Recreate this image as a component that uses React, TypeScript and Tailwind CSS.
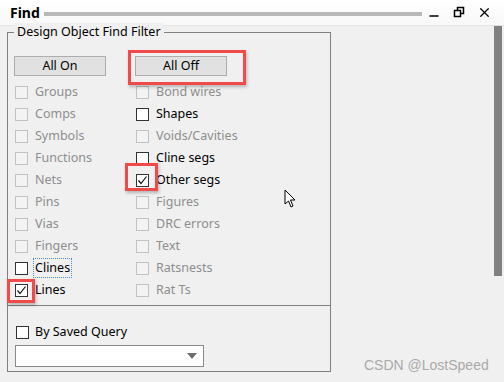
import { Minus, X } from 'lucide-react';

type Item = { label: string; enabled?: boolean; checked?: boolean; focus?: boolean };

const leftItems: Item[] = [
  { label: 'Groups' },
  { label: 'Comps' },
  { label: 'Symbols' },
  { label: 'Functions' },
  { label: 'Nets' },
  { label: 'Pins' },
  { label: 'Vias' },
  { label: 'Fingers' },
  { label: 'Clines', enabled: true, focus: true },
  { label: 'Lines', enabled: true, checked: true },
];

const rightItems: Item[] = [
  { label: 'Bond wires' },
  { label: 'Shapes', enabled: true },
  { label: 'Voids/Cavities' },
  { label: 'Cline segs', enabled: true },
  { label: 'Other segs', enabled: true, checked: true },
  { label: 'Figures' },
  { label: 'DRC errors' },
  { label: 'Text' },
  { label: 'Ratsnests' },
  { label: 'Rat Ts' },
];

function Box({ enabled, checked }: { enabled?: boolean; checked?: boolean }) {
  return (
    <span
      className={`w-[13px] h-[13px] shrink-0 border flex items-center justify-center ${
        enabled ? 'border-[#333333] bg-white' : 'border-[#c2c2c2] bg-[#f3f3f3]'
      }`}
    >
      {checked && (
        <svg width="11" height="11" viewBox="0 0 11 11">
          <path d="M1.5 5.5 L4 8.5 L9.5 1.5" fill="none" stroke="#111" strokeWidth="1.2" />
        </svg>
      )}
    </span>
  );
}

function Row({ item }: { item: Item }) {
  return (
    <div className="h-[22px] flex items-center">
      <Box enabled={item.enabled} checked={item.checked} />
      <span
        className={`ml-[6px] leading-[18px] px-[1px] ${
          item.focus ? 'outline outline-1 outline-dotted outline-[#4a90d9]' : ''
        } ${item.enabled ? 'text-black' : 'text-[#8e8e8e]'}`}
      >
        {item.label}
      </span>
    </div>
  );
}

function WinButton({ label }: { label: string }) {
  return (
    <div className="w-[92px] h-[20px] border border-[#adadad] bg-[#e1e1e1] flex items-center justify-center text-black">
      {label}
    </div>
  );
}

export default function App() {
  return (
    <div
      className="w-[504px] h-[382px] bg-[#f0f0f0] relative overflow-hidden flex flex-col text-[12.5px]"
      style={{ fontFamily: '"Noto Sans", "Open Sans", sans-serif' }}
    >
      {/* title bar */}
      <div className="h-[26px] shrink-0 bg-gradient-to-b from-white to-[#f8f8f8] border-b border-[#e4e4e4] flex items-center pl-[10px] pr-[12px]">
        <span className="font-bold text-[14px] text-black leading-none">Find</span>
        <div className="ml-[4px] w-[389px] h-[4px] bg-[#b9b9b9] mt-[2px]" />
        <div className="flex items-center ml-[5px] gap-[12px]">
          <Minus size={14} strokeWidth={2.2} className="text-black mt-[6px]" />
          <svg width="12" height="12" viewBox="0 0 12 12" className="mb-[1px]">
            <rect x="1.5" y="4.5" width="6" height="6" fill="none" stroke="#000" strokeWidth="1.5" />
            <path d="M4.5 4.5 V1.5 H10.5 V7.5 H7.5" fill="none" stroke="#000" strokeWidth="1.5" />
          </svg>
          <X size={15} strokeWidth={2} className="text-black" />
        </div>
      </div>

      <div className="flex flex-1">
        {/* group box */}
        <div className="relative ml-[7px] mt-[6px] w-[324px] h-[340px] border border-[#7f7f7f] flex flex-col">
          <span className="absolute -top-[10px] left-[6px] px-[3px] bg-[#f0f0f0] text-black leading-[18px]">
            Design Object Find Filter
          </span>
          <div className="flex pl-[6px] pt-[23px] gap-[29px]">
            <WinButton label="All On" />
            <WinButton label="All Off" />
          </div>
          <div className="flex pl-[7px] pt-[5px]">
            <div className="w-[121px] flex flex-col">
              {leftItems.map((it) => (
                <Row key={it.label} item={it} />
              ))}
            </div>
            <div className="flex flex-col">
              {rightItems.map((it) => (
                <Row key={it.label} item={it} />
              ))}
            </div>
          </div>
          <div className="mt-[4px] border-t border-[#7f7f7f] flex flex-col pl-[7px] pt-[18px]">
            <div className="h-[16px] flex items-center pl-[1px]">
              <Box enabled />
              <span className="ml-[6px] text-black">By Saved Query</span>
            </div>
            <div className="mt-[5px] w-[189px] h-[22px] border border-[#8a8a8a] bg-white flex items-center justify-end pr-[6px]">
              <svg width="10" height="6" viewBox="0 0 10 6">
                <path d="M0 0 H10 L5 6 Z" fill="#6d6d6d" />
              </svg>
            </div>
          </div>
        </div>
        <div className="flex-1" />
        {/* scrollbar */}
        <div className="w-[8px] h-[250px] bg-[#808080] mr-[2px]" />
      </div>

      {/* red highlight marks */}
      <div className="absolute left-[128px] top-[50px] w-[118px] h-[35px] border-[3px] border-[#f14a4a] shadow-[1px_2px_3px_rgba(0,0,0,0.25)]" />
      <div className="absolute left-[125px] top-[163px] w-[33px] h-[28px] border-[3px] border-[#f14a4a] shadow-[1px_2px_3px_rgba(0,0,0,0.25)]" />
      <div className="absolute left-[7px] top-[279px] w-[28px] h-[24px] border-[3px] border-[#f14a4a] shadow-[1px_2px_3px_rgba(0,0,0,0.25)]" />

      {/* mouse cursor */}
      <svg className="absolute left-[284px] top-[189px]" width="13" height="20" viewBox="0 0 13 20">
        <path d="M1 1 V15 L4.5 12 L7 18 L9 17 L6.5 11 L11 11 Z" fill="#fff" stroke="#000" strokeWidth="1" />
      </svg>

      <span
        className="absolute left-[364px] top-[355px] text-[14px] text-[#a9a9a9]"
        style={{ fontFamily: '"Liberation Sans", Arial, sans-serif' }}
      >
        CSDN @LostSpeed
      </span>
    </div>
  );
}
